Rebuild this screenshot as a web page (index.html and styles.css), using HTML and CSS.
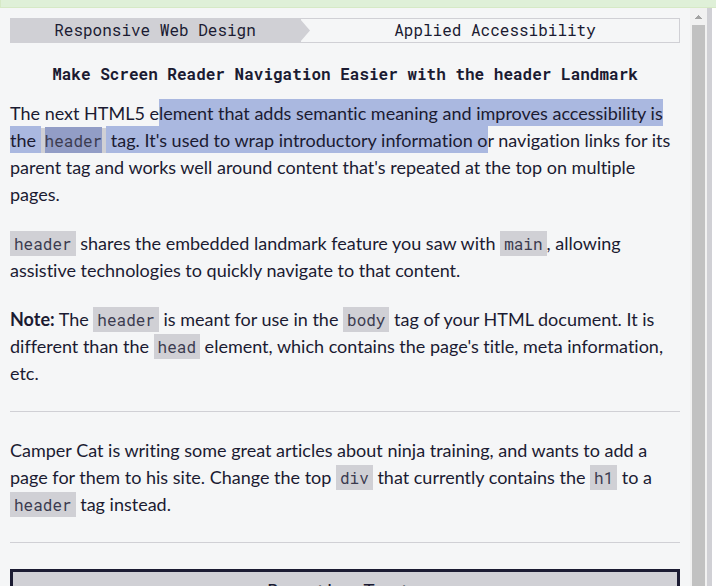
FILE: index.html
```html
<!DOCTYPE html>
<html lang="en">
<head>
<meta charset="utf-8">
<title>Make Screen Reader Navigation Easier with the header Landmark</title>
<link rel="stylesheet" href="styles.css">
</head>
<body>
<div class="banner"></div>
<div class="workspace">
  <main class="lesson">
    <nav class="crumbs" aria-label="Breadcrumb">
      <a class="crumb crumb-block" href="#">Responsive Web Design</a>
      <a class="crumb crumb-lesson" href="#">Applied Accessibility</a>
    </nav>
    <h1 class="title">Make Screen Reader Navigation Easier with the header Landmark</h1>
    <section class="text">
      <p>The next HTML5 e<mark>lement that adds semantic meaning and improves accessibility is </mark><mark>the </mark><code><mark>header</mark></code><mark> tag. It's used to wrap introductory information o</mark>r navigation links for its parent tag and works well around content that's repeated at the top on multiple pages.</p>
      <p><code>header</code> shares the embedded landmark feature you saw with <code>main</code>, allowing assistive technologies to quickly navigate to that content.</p>
      <p><strong>Note:</strong> The <code>header</code> is meant for use in the <code>body</code> tag of your HTML document. It is different than the <code>head</code> element, which contains the page's title, meta information, etc.</p>
    </section>
    <hr>
    <section class="text">
      <p>Camper Cat is writing some great articles about ninja training, and wants to add a page for them to his site. Change the top <code>div</code> that currently contains the <code>h1</code> to a <code>header</code> tag instead.</p>
    </section>
    <hr>
    <button class="run" type="button">Run the Tests</button>
  </main>
  <div class="scrollbar">
    <svg class="arrow" viewBox="0 0 7 4" aria-hidden="true"><path d="M3 0h1v1h1v1h1v1h1v1H0V3h1V2h1V1h1z"/></svg>
    <div class="thumb"></div>
  </div>
  <div class="splitter"></div>
  <div class="editor"></div>
</div>
</body>
</html>
```
FILE: styles.css
```css
* {
  box-sizing: border-box;
}

body {
  margin: 0;
  height: 100vh;
  display: flex;
  flex-direction: column;
  overflow: hidden;
  background: #f5f6f7;
  color: #1b1b32;
  font: 18px/27px Lato, sans-serif;
  font-variant-ligatures: none;
}

.banner {
  flex: 0 0 8px;
  background: #dff0d8;
  border-bottom: 1px solid #d6e9c6;
  border-left: 1px solid #d6e9c6;
}

.workspace {
  flex: 1;
  min-height: 0;
  display: flex;
}

.lesson {
  flex: 1;
  min-width: 0;
  overflow: hidden;
  padding: 10px;
}

.crumbs {
  display: flex;
  height: 25px;
  font: 16px/22px "Roboto Mono", "Liberation Mono", monospace;
}

.crumb {
  flex: 1;
  border: 1px solid #d0d0d5;
  border-left: 0;
  color: inherit;
  text-align: center;
  text-decoration: none;
}

.crumb-block {
  position: relative;
  flex: 0 0 291px;
  background: #d0d0d5;
}

.crumb-block::after {
  content: "";
  position: absolute;
  top: 0;
  left: 100%;
  width: 10px;
  height: 23px;
  background: #d0d0d5;
  clip-path: polygon(0 0, 100% 50%, 0 100%);
}

.crumb-lesson {
  padding-left: 10px;
}

.title {
  margin: 19px 0 15px;
  font: bold 16px/23px "Roboto Mono", "Liberation Mono", monospace;
  text-align: center;
}

.text p {
  margin: 0 0 22px;
}

code {
  padding: 2px 4px;
  background: #d0d0d5;
  color: #3b3b4f;
  font: 16px/20px "Roboto Mono", "Liberation Mono", monospace;
}

mark {
  padding: 3px 0 2px;
  background: #aab8e0;
  color: inherit;
}

code mark {
  background: #929dc6;
}

hr {
  margin: 24px 0 25px;
  border: 0;
  border-top: 1px solid #d0d0d5;
}

.run {
  display: block;
  width: 100%;
  margin-top: 26px;
  padding: 6px 12px;
  border: 3px solid #1b1b32;
  background: #d0d0d5;
  color: #1b1b32;
  font: 20px/27px "Roboto Mono", "Liberation Mono", monospace;
}

.scrollbar {
  flex: 0 0 17px;
  display: flex;
  flex-direction: column;
  align-items: center;
  background: #f1f1f1;
}

.arrow {
  width: 7px;
  height: 4px;
  margin: 7px 0 6px;
  fill: #a3a3a3;
}

.thumb {
  flex: 1;
  width: 13px;
  background: #c1c1c1;
}

.splitter {
  flex: 0 0 5px;
  background: #d0d0d5;
}

.editor {
  flex: 0 0 4px;
  background: #fff;
}
```
